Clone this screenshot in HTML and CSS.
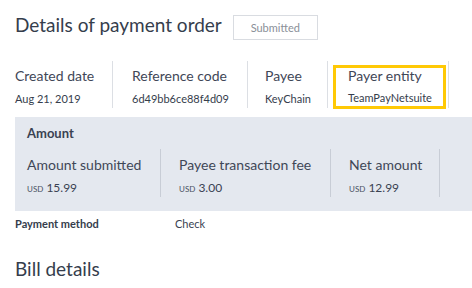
FILE: index.html
```html
<!DOCTYPE html>
<html>
<head>
<meta charset="utf-8">
<link rel="stylesheet" href="styles.css">
</head>
<body>
<div class="page">
  <div class="header">
    <h1 class="title">Details of payment order</h1>
    <span class="badge">Submitted</span>
  </div>
  <div class="stats">
    <div class="stat s1">
      <div class="label">Created date</div>
      <div class="value">Aug 21, 2019</div>
    </div>
    <div class="stat s2">
      <div class="label">Reference code</div>
      <div class="value">6d49bb6ce88f4d09</div>
    </div>
    <div class="stat s3">
      <div class="label">Payee</div>
      <div class="value">KeyChain</div>
    </div>
    <div class="stat s4">
      <div class="highlight">
        <div class="label">Payer entity</div>
        <div class="value">TeamPayNetsuite</div>
      </div>
    </div>
  </div>
  <div class="panel">
    <div class="panel-title">Amount</div>
    <div class="amounts">
      <div class="amt a1">
        <div class="label">Amount submitted</div>
        <div class="money"><span class="cur">USD</span> 15.99</div>
      </div>
      <div class="amt a2">
        <div class="label">Payee transaction fee</div>
        <div class="money"><span class="cur">USD</span> 3.00</div>
      </div>
      <div class="amt a3">
        <div class="label">Net amount</div>
        <div class="money"><span class="cur">USD</span> 12.99</div>
      </div>
    </div>
  </div>
  <div class="method">
    <span class="method-label">Payment method</span>
    <span class="method-value">Check</span>
  </div>
  <h2 class="subtitle">Bill details</h2>
</div>
</body>
</html>
```
FILE: styles.css
```css
html, body {
  margin: 0;
  padding: 0;
  background: #ffffff;
  overflow: hidden;
}
body {
  font-family: Lato, "Open Sans", sans-serif;
  color: #3a4252;
}
.page {
  padding-left: 15px;
}
.header {
  display: flex;
  align-items: flex-start;
  height: 56px;
  box-sizing: border-box;
  padding-top: 13px;
}
.title {
  margin: 0;
  font-size: 19px;
  font-weight: 400;
  line-height: 24px;
  color: #353d4c;
}
.badge {
  margin-left: 11px;
  margin-top: 2px;
  width: 83px;
  height: 23px;
  border: 1px solid #d9dce1;
  box-sizing: content-box;
  display: flex;
  align-items: center;
  justify-content: center;
  font-size: 11px;
  color: #8a8f98;
}
.stats {
  display: grid;
  grid-template-columns: 98px 135px 80px 121px;
  height: 54px;
}
.stat {
  border-right: 1px solid #dcdfe4;
  box-sizing: border-box;
  padding-left: 19px;
  margin-top: 5px;
  height: 47px;
  padding-top: 5px;
}
.stat.s1 { padding-left: 0; }
.stat.s3 { padding-left: 17px; }
.stat.s4 { padding-left: 5px; padding-top: 4px; padding-right: 2px; }
.highlight {
  border: 3px solid #ffc905;
  height: 44px;
  box-sizing: border-box;
  padding-left: 12px;
}
.label {
  font-size: 14px;
  line-height: 20px;
  color: #3f4757;
}
.highlight .label { line-height: 16px; }
.value {
  font-size: 11px;
  line-height: 16px;
  margin-top: 5px;
  color: #353d4c;
}
.highlight .value { margin-top: 6px; }
.panel {
  background: #e4e8ef;
  height: 94px;
  padding-left: 12px;
  box-sizing: border-box;
  padding-top: 7px;
  margin-top: 7px;
}
.panel-title {
  font-size: 13px;
  font-weight: 700;
  line-height: 18px;
  color: #3a4252;
}
.amounts {
  display: grid;
  grid-template-columns: 134px 170px 109px;
  margin-top: 7px;
}
.amt {
  border-right: 1px solid #c8cdd6;
  height: 48px;
  padding-left: 18px;
  box-sizing: border-box;
  padding-top: 6px;
}
.amt.a1 { padding-left: 0; }
.money {
  font-size: 12px;
  line-height: 16px;
  margin-top: 5px;
  color: #3a4252;
}
.cur {
  font-size: 8px;
  text-transform: uppercase;
  color: #4a5263;
}
.method {
  display: flex;
  font-size: 11px;
  line-height: 16px;
  padding-top: 5px;
}
.method-label {
  width: 160px;
  font-weight: 700;
  color: #353d4c;
}
.method-value {
  color: #3a4252;
}
.subtitle {
  margin: 0;
  margin-top: 25px;
  font-size: 19px;
  font-weight: 400;
  line-height: 24px;
  color: #353d4c;
}
```
